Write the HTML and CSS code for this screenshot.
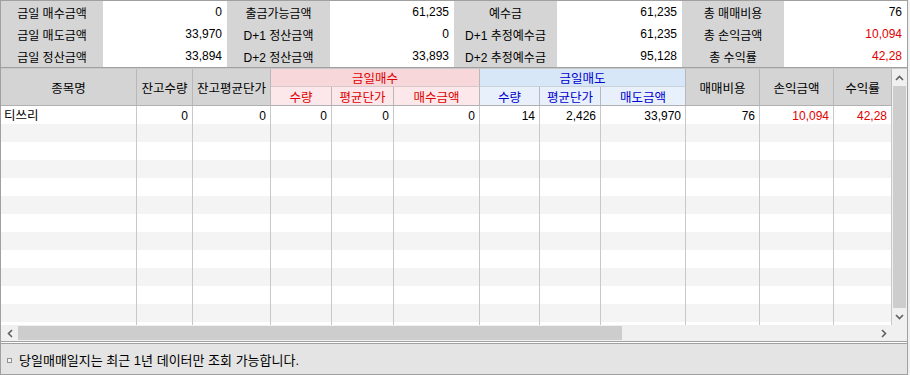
FILE: index.html
```html
<!doctype html>
<html lang="ko">
<head>
  <meta charset="utf-8">
  <title>당일매매일지</title>
  <link rel="stylesheet" href="styles.css">
</head>
<body>
  <main class="screen">
    <!-- summary -->
    <div class="summary">
      <div class="lbl">금일 매수금액</div><div class="val">0</div>
      <div class="lbl">출금가능금액</div><div class="val">61,235</div>
      <div class="lbl">예수금</div><div class="val">61,235</div>
      <div class="lbl">총 매매비용</div><div class="val">76</div>

      <div class="lbl">금일 매도금액</div><div class="val">33,970</div>
      <div class="lbl">D+1 정산금액</div><div class="val">0</div>
      <div class="lbl">D+1 추정예수금</div><div class="val">61,235</div>
      <div class="lbl">총 손익금액</div><div class="val red">10,094</div>

      <div class="lbl">금일 정산금액</div><div class="val">33,894</div>
      <div class="lbl">D+2 정산금액</div><div class="val">33,893</div>
      <div class="lbl">D+2 추정예수금</div><div class="val">95,128</div>
      <div class="lbl">총 수익률</div><div class="val red">42,28</div>
    </div>

    <!-- grid -->
    <div class="grid">
      <div class="grid-main">
        <div class="grid-view">
          <div class="hdr">
            <div class="hc span-r">종목명</div>
            <div class="hc span-r">잔고수량</div>
            <div class="hc span-r">잔고평균단가</div>
            <div class="hc span-c buy-grp">금일매수</div>
            <div class="hc span-c sell-grp">금일매도</div>
            <div class="hc span-r">매매비용</div>
            <div class="hc span-r">손익금액</div>
            <div class="hc span-r">수익률</div>
            <div class="hc buy">수량</div>
            <div class="hc buy">평균단가</div>
            <div class="hc buy">매수금액</div>
            <div class="hc sell">수량</div>
            <div class="hc sell">평균단가</div>
            <div class="hc sell">매도금액</div>
          </div>
          <div class="rows">
            <div class="row">
              <div class="c txt">티쓰리</div><div class="c">0</div><div class="c">0</div>
              <div class="c">0</div><div class="c">0</div><div class="c">0</div>
              <div class="c">14</div><div class="c">2,426</div><div class="c">33,970</div>
              <div class="c">76</div><div class="c red">10,094</div><div class="c red">42,28</div>
            </div>
            <div class="row"><div class="c"></div><div class="c"></div><div class="c"></div><div class="c"></div><div class="c"></div><div class="c"></div><div class="c"></div><div class="c"></div><div class="c"></div><div class="c"></div><div class="c"></div><div class="c"></div></div>
            <div class="row"><div class="c"></div><div class="c"></div><div class="c"></div><div class="c"></div><div class="c"></div><div class="c"></div><div class="c"></div><div class="c"></div><div class="c"></div><div class="c"></div><div class="c"></div><div class="c"></div></div>
            <div class="row"><div class="c"></div><div class="c"></div><div class="c"></div><div class="c"></div><div class="c"></div><div class="c"></div><div class="c"></div><div class="c"></div><div class="c"></div><div class="c"></div><div class="c"></div><div class="c"></div></div>
            <div class="row"><div class="c"></div><div class="c"></div><div class="c"></div><div class="c"></div><div class="c"></div><div class="c"></div><div class="c"></div><div class="c"></div><div class="c"></div><div class="c"></div><div class="c"></div><div class="c"></div></div>
            <div class="row"><div class="c"></div><div class="c"></div><div class="c"></div><div class="c"></div><div class="c"></div><div class="c"></div><div class="c"></div><div class="c"></div><div class="c"></div><div class="c"></div><div class="c"></div><div class="c"></div></div>
            <div class="row"><div class="c"></div><div class="c"></div><div class="c"></div><div class="c"></div><div class="c"></div><div class="c"></div><div class="c"></div><div class="c"></div><div class="c"></div><div class="c"></div><div class="c"></div><div class="c"></div></div>
            <div class="row"><div class="c"></div><div class="c"></div><div class="c"></div><div class="c"></div><div class="c"></div><div class="c"></div><div class="c"></div><div class="c"></div><div class="c"></div><div class="c"></div><div class="c"></div><div class="c"></div></div>
            <div class="row"><div class="c"></div><div class="c"></div><div class="c"></div><div class="c"></div><div class="c"></div><div class="c"></div><div class="c"></div><div class="c"></div><div class="c"></div><div class="c"></div><div class="c"></div><div class="c"></div></div>
            <div class="row"><div class="c"></div><div class="c"></div><div class="c"></div><div class="c"></div><div class="c"></div><div class="c"></div><div class="c"></div><div class="c"></div><div class="c"></div><div class="c"></div><div class="c"></div><div class="c"></div></div>
            <div class="row"><div class="c"></div><div class="c"></div><div class="c"></div><div class="c"></div><div class="c"></div><div class="c"></div><div class="c"></div><div class="c"></div><div class="c"></div><div class="c"></div><div class="c"></div><div class="c"></div></div>
            <div class="row"><div class="c"></div><div class="c"></div><div class="c"></div><div class="c"></div><div class="c"></div><div class="c"></div><div class="c"></div><div class="c"></div><div class="c"></div><div class="c"></div><div class="c"></div><div class="c"></div></div>
            <div class="row"><div class="c"></div><div class="c"></div><div class="c"></div><div class="c"></div><div class="c"></div><div class="c"></div><div class="c"></div><div class="c"></div><div class="c"></div><div class="c"></div><div class="c"></div><div class="c"></div></div>
          </div>
        </div>
        <div class="vscroll">
          <div class="sb-btn">
            <svg width="9" height="6" viewBox="0 0 9 6"><path d="M1 5 L4.5 1.5 L8 5" fill="none" stroke="#606060" stroke-width="1.6"/></svg>
          </div>
          <div class="sb-thumb-v"></div>
          <div class="sb-btn">
            <svg width="9" height="6" viewBox="0 0 9 6"><path d="M1 1 L4.5 4.5 L8 1" fill="none" stroke="#606060" stroke-width="1.6"/></svg>
          </div>
        </div>
      </div>
      <div class="hscroll">
        <div class="sb-btn-h">
          <svg width="6" height="9" viewBox="0 0 6 9"><path d="M5 1 L1.5 4.5 L5 8" fill="none" stroke="#606060" stroke-width="1.6"/></svg>
        </div>
        <div class="sb-thumb-h"></div>
        <div class="sb-track"></div>
        <div class="sb-btn-h">
          <svg width="6" height="9" viewBox="0 0 6 9"><path d="M1 1 L4.5 4.5 L1 8" fill="none" stroke="#606060" stroke-width="1.6"/></svg>
        </div>
        <div class="sb-corner"></div>
      </div>
    </div>

    <!-- status -->
    <div class="status">
      <span class="bullet"></span>
      <span>당일매매일지는 최근 1년 데이터만 조회 가능합니다.</span>
    </div>
  </main>
</body>
</html>
```

FILE: styles.css
```css
html, body {
  margin: 0;
  background: #f0f0f0;
  font-family: "Liberation Sans", "Noto Sans CJK KR", sans-serif;
  font-size: 12px;
  color: #000;
}

.screen {
  width: 908px;
  height: 375px;
  box-sizing: border-box;
  border-left: 1px solid #a0a0a0;
  border-right: 1px solid #a0a0a0;
  display: flex;
  flex-direction: column;
  background: #fff;
}

.red { color: #e00000; }

/* summary */
.summary {
  display: grid;
  grid-template-columns: 102px 124px 103px 124px 103px 125px 102px 123px;
  grid-auto-rows: 22px;
  border-top: 1px solid #a0a0a0;
  border-bottom: 1px solid #a0a0a0;
}

.lbl {
  background: #d5d5d5;
  display: flex;
  align-items: center;
  justify-content: center;
  white-space: nowrap;
}

.val {
  background: #fff;
  display: flex;
  align-items: center;
  justify-content: flex-end;
  padding-right: 5px;
}

/* grid */
.grid {
  border-top: 1px solid #c8c8c8;
  border-bottom: 1px solid #a0a0a0;
  display: flex;
  flex-direction: column;
}

.grid-main {
  display: flex;
  height: 256px;
}

.grid-view {
  width: 891px;
  overflow: hidden;
}

.hdr, .row {
  display: grid;
  grid-template-columns: 136px 56px 78px 61px 62px 86px 60px 61px 85px 74px 74px 58px;
}

.hdr {
  grid-template-rows: 18px 19px;
  background: #d4d4d4;
}

.hc {
  box-sizing: border-box;
  border-right: 1px solid #b8b8b8;
  border-bottom: 1px solid #b0b0b0;
  display: flex;
  align-items: center;
  justify-content: center;
  white-space: nowrap;
  font-size: 12.5px;
}

.span-r { grid-row: span 2; }
.span-c { grid-column: span 3; }

.buy-grp {
  background: #f7d7da;
  color: #e00000;
  border-bottom-color: #d8c8ca;
}
.sell-grp {
  background: #d8e7f7;
  color: #0000d0;
  border-bottom-color: #c8d0da;
}
.buy {
  background: #fce8ea;
  color: #e00000;
}
.sell {
  background: #e8f0fb;
  color: #0000d0;
}

.rows {
  height: 219px;
  overflow: hidden;
}

.row {
  height: 18px;
  background: #fff;
}
.row:nth-child(even) { background: #f4f4f4; }

.c {
  box-sizing: border-box;
  border-right: 1px solid #c8c8c8;
  padding-right: 4px;
  text-align: right;
  line-height: 20px;
  white-space: nowrap;
}
.c.txt {
  text-align: left;
  padding-left: 3px;
  font-size: 12.5px;
}

/* scrollbars */
.vscroll {
  width: 15px;
  display: flex;
  flex-direction: column;
  background: #f0f0f0;
}

.sb-btn {
  height: 17px;
  display: flex;
  align-items: center;
  justify-content: center;
}

.sb-thumb-v {
  flex: 1;
  background: #cdcdcd;
  margin: 0 1px;
}

.hscroll {
  display: flex;
  height: 16px;
  background: #f0f0f0;
}

.sb-btn-h {
  width: 17px;
  display: flex;
  align-items: center;
  justify-content: center;
}

.sb-thumb-h {
  width: 604px;
  background: #cdcdcd;
  margin: 1px 0;
}

.sb-track { flex: 1; }

.sb-corner {
  width: 15px;
  background: #f0f0f0;
}

/* status */
.status {
  margin-top: 1px;
  flex: 1;
  background: #e4e4e4;
  border-top: 1px solid #a0a0a0;
  border-bottom: 1px solid #a0a0a0;
  display: flex;
  align-items: center;
  gap: 7px;
  padding-left: 6px;
  font-size: 13px;
}

.bullet {
  width: 3px;
  height: 3px;
  border: 1px solid #909090;
  background: #f4f4f4;
  margin-top: 2px;
}
```
